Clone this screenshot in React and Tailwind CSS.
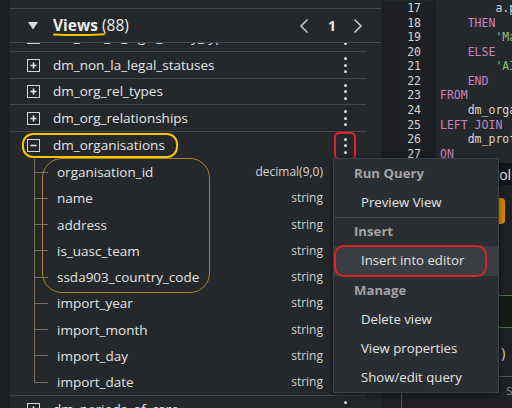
import React from "react";

const tables = ["dm_non_la_legal_statuses", "dm_org_rel_types", "dm_org_relationships"];

const columns = [
  ["organisation_id", "decimal(9,0)"],
  ["name", "string"],
  ["address", "string"],
  ["is_uasc_team", "string"],
  ["ssda903_country_code", "string"],
  ["import_year", "string"],
  ["import_month", "string"],
  ["import_day", "string"],
  ["import_date", "string"],
];

const code = [
  [17, [["        a.p", "text-[#d6d6d6]"]]],
  [18, [["    THEN", "text-[#c586c0]"]]],
  [19, [["        'Ma", "text-[#8fc27a]"]]],
  [20, [["    ELSE", "text-[#c586c0]"]]],
  [21, [["        'AI", "text-[#8fc27a]"]]],
  [22, [["    END", "text-[#c586c0]"]]],
  [23, [["FROM", "text-[#c586c0]"]]],
  [24, [["    dm_orga", "text-[#d6d6d6]"]]],
  [25, [["LEFT JOIN", "text-[#c586c0]"]]],
  [26, [["    dm_prof", "text-[#d6d6d6]"]]],
  [27, [["ON", "text-[#c586c0]"]]],
];

const Kebab = () => (
  <div className="flex flex-col items-center gap-[3.5px] w-[4px]">
    <span className="w-[3px] h-[3px] rounded-full bg-[#dcdcdc]" />
    <span className="w-[3px] h-[3px] rounded-full bg-[#dcdcdc]" />
    <span className="w-[3px] h-[3px] rounded-full bg-[#dcdcdc]" />
  </div>
);

const ExpandBox = ({ open }) => (
  <div className="w-[13px] h-[13px] border-[1.5px] border-[#d4d4d4] flex items-center justify-center shrink-0">
    <svg width="7" height="7" viewBox="0 0 7 7">
      <path d="M0.5 3.5h6" stroke="#e4e4e4" strokeWidth="1.6" />
      {!open && <path d="M3.5 0.5v6" stroke="#e4e4e4" strokeWidth="1.6" />}
    </svg>
  </div>
);

const TableRow = ({ name, open, h = "h-[27px]" }) => (
  <div className={`${h} mr-[15px] border-b border-[#4a4846] flex items-center pl-[17px] pr-[19px]`}>
    <ExpandBox open={open} />
    <span className="ml-[13px] text-[13.5px] text-[#e6e6e6] flex-1">{name}</span>
    <Kebab />
  </div>
);

const ColumnRow = ({ name, type, last }) => (
  <div className="h-[26.25px] flex items-stretch pr-[43px]">
    <div className="ml-[24px] w-[14px] flex flex-col">
      <div className="flex-1 border-l border-b border-[#7b6f60]" />
      <div className={`flex-1 ${last ? "" : "border-l border-[#7b6f60]"}`} />
    </div>
    <div className="flex-1 flex items-center justify-between pl-[9px]">
      <span className="text-[13.5px] text-[#e2e2e2]">{name}</span>
      <span className="text-[12px] text-[#d2d2d2]">{type}</span>
    </div>
  </div>
);

const MenuHeader = ({ children, h = "h-[29px]" }) => (
  <div className={`${h} flex items-center pl-[20px] text-[13.2px] font-bold text-[#a3a3a3]`}>{children}</div>
);

const MenuItem = ({ children, active, h = "h-[29px]" }) => (
  <div className={`${h} flex items-center pl-[27px] text-[13.2px] text-[#e4e4e4] ${active ? "bg-[#3a3d42]" : ""}`}>
    {children}
  </div>
);

export default function App() {
  return (
    <div className="w-[512px] h-[408px] overflow-hidden flex bg-[#1c1e21] relative font-['Open_Sans',sans-serif]">
      {/* left strip */}
      <div className="w-[10px] shrink-0" />

      {/* tree panel */}
      <div className="w-[371px] shrink-0 bg-[#25282b] flex flex-col pt-[8px]">
        <div className="h-[35px] border-y border-[#46464a] flex items-center pl-[18px] pr-[18px] relative">
          <svg width="10" height="8" viewBox="0 0 10 8" className="mt-[1px]">
            <path d="M0 0h10L5 7.5z" fill="#dcdcdc" />
          </svg>
          <span className="ml-[15px] text-[15.5px] text-[#ececec]">
            <span className="font-bold">Views</span> (88)
          </span>
          <svg width="52" height="5" viewBox="0 0 52 5" className="absolute left-[43px] top-[23px]">
            <path d="M1 2.5 Q25 3.8 51 2.2" stroke="#f2c200" strokeWidth="2" fill="none" strokeLinecap="round" />
          </svg>
          <div className="ml-auto flex items-center">
            <svg width="10" height="16" viewBox="0 0 10 16">
              <path d="M8.5 1.5 2 8l6.5 6.5" stroke="#c4c4c4" strokeWidth="1.6" fill="none" />
            </svg>
            <span className="ml-[19px] mr-[17px] text-[14px] font-bold text-[#ececec] w-[8px] text-center">1</span>
            <svg width="10" height="16" viewBox="0 0 10 16">
              <path d="M1.5 1.5 8 8l-6.5 6.5" stroke="#c4c4c4" strokeWidth="1.6" fill="none" />
            </svg>
          </div>
        </div>

        <div className="flex-1 overflow-hidden">
          <div className="-mt-[20px]">
            <TableRow name="dm_non_la_legal_entity_types" h="h-[29px]" />
            {tables.map((t) => (
              <TableRow key={t} name={t} h={t === "dm_org_rel_types" ? "h-[26px]" : "h-[27px]"} />
            ))}
            <div className="h-[27px] mr-[15px] flex items-center pl-[17px] pr-[19px]">
              <ExpandBox open />
              <span className="ml-[13px] text-[13.5px] text-[#e6e6e6] flex-1">dm_organisations</span>
              <Kebab />
            </div>
            <div className="mr-[15px] border-b border-[#4a4846]">
              {columns.map(([n, t], i) => (
                <ColumnRow key={n} name={n} type={t} last={i === columns.length - 1} />
              ))}
            </div>
            <TableRow name="dm_periods_of_care" />
          </div>
        </div>
      </div>

      {/* editor */}
      <div className="flex-1 flex flex-col">
        <div className="h-[163px] flex font-['DejaVu_Sans_Mono',monospace] text-[11.5px] leading-[14.57px] pt-[1px] bg-[#25282b]">
          <div className="w-[55px] bg-[#1d1f22] text-right pr-[15px] text-[#d4d4d4]">
            {code.map(([n]) => (
              <div key={n}>{n}</div>
            ))}
          </div>
          <div className="flex-1 pl-[4px] whitespace-pre overflow-hidden">
            {code.map(([n, parts]) => (
              <div key={n}>
                {parts.map(([t, c], i) => (
                  <span key={i} className={c}>{t}</span>
                ))}
              </div>
            ))}
          </div>
        </div>
        <div className="flex-1 bg-[#1f2124] flex flex-col">
          <div className="h-[22px] bg-[#141619] flex items-center pl-[102px] text-[14px] text-[#e6e6e6] whitespace-nowrap overflow-hidden">
            Tool type
          </div>
          <div className="h-[110px] pt-[13px] pl-[60px]">
            <div className="h-[26px] w-[64px] rounded-[4px] bg-[#e58a00]" />
          </div>
          <div className="h-[33px] bg-[#181c18] border-y border-[#4c7a3e]" />
          <div className="h-[48px] flex items-center pl-[120px] text-[15px] text-[#d0d0d0]">)</div>
          <div className="flex-1 ml-[20px] border-t border-l border-[#55585c] rounded-tl-[6px] flex items-start pl-[104px] pt-[2px] text-[14px] text-[#7a7d80]">
            s
          </div>
        </div>
      </div>

      {/* annotations */}
      <div className="absolute left-[22px] top-[133px] w-[156px] h-[25px] rounded-[11px] border-2 border-[#f5c400]" />
      <div className="absolute left-[42px] top-[158px] w-[168px] h-[135px] rounded-[20px] border border-[#a8852c]" />
      <div className="absolute left-[334px] top-[132px] w-[22px] h-[28px] rounded-[5px] border-2 border-[#e0202a]" />

      {/* context menu */}
      <div className="absolute left-[333px] top-[158px] w-[166px] h-[235px] bg-[#2a2d31] border border-[#3c3f43] shadow-[0_2px_8px_rgba(0,0,0,0.5)]">
        <MenuHeader>Run Query</MenuHeader>
        <MenuItem>Preview View</MenuItem>
        <div className="h-px bg-[#44474b]" />
        <MenuHeader h="h-[28px]">Insert</MenuHeader>
        <div className="relative">
          <MenuItem active h="h-[30px]">Insert into editor</MenuItem>
          <div className="absolute left-0 top-[-1px] w-[153px] h-[32px] rounded-[10px] border-2 border-[#e0202a]" />
        </div>
        <MenuHeader>Manage</MenuHeader>
        <MenuItem>Delete view</MenuItem>
        <MenuItem>View properties</MenuItem>
        <MenuItem>Show/edit query</MenuItem>
      </div>
    </div>
  );
}
